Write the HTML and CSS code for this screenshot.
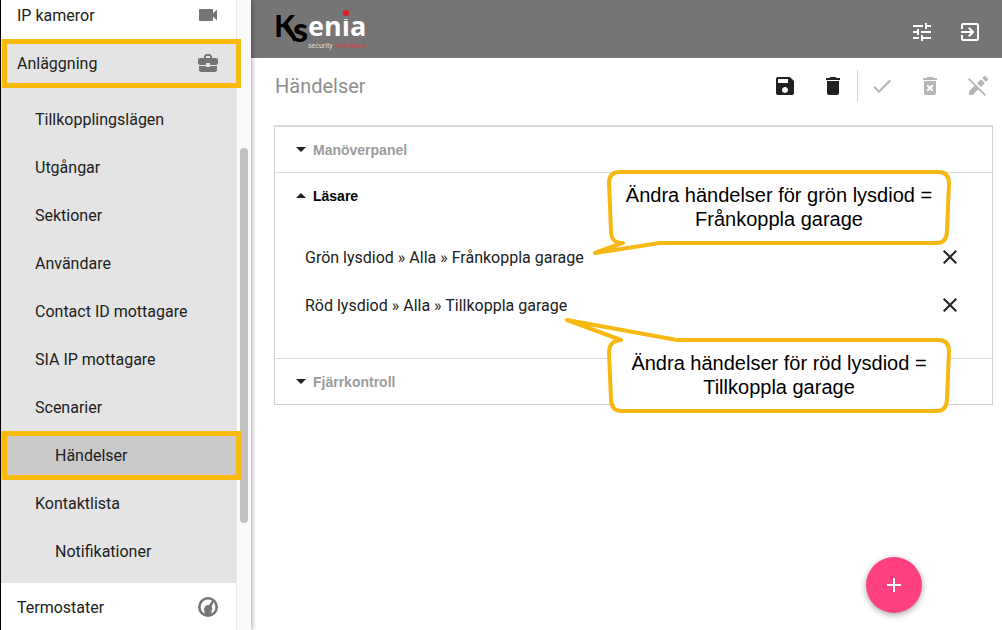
FILE: index.html
```html
<!DOCTYPE html>
<html lang="sv">
<head>
<meta charset="utf-8">
<title>Ksenia – Händelser</title>
<link rel="stylesheet" href="styles.css">
</head>
<body>
<div class="app">
  <nav class="sidebar" aria-label="Meny">
    <div class="menu">
      <a class="item item-first" href="#"><span>IP kameror</span>
        <svg class="icon" viewBox="0 0 24 24"><path d="M17 10.500V7c0-.55-.45-1-1-1H4c-.55 0-1 .45-1 1v10c0 .55.45 1 1 1h12c.55 0 1-.45 1-1v-3.500l4 4v-11l-4 4z"/></svg></a>
      <a class="item item-open marked" href="#"><span>Anläggning</span>
        <svg class="icon" viewBox="0 0 24 24"><path d="M10 16v-1H3.010L3 19c0 1.110.89 2 2 2h14c1.110 0 2-.89 2-2v-4h-7v1h-4zm10-9h-4.010V5l-2-2h-4l-2 2v2H4c-1.100 0-2 .9-2 2v3c0 1.110.89 2 2 2h6v-2h4v2h6c1.100 0 2-.9 2-2V9c0-1.100-.9-2-2-2zm-6 0h-4V5h4v2z"/></svg></a>
      <div class="submenu">
        <a class="item sub" href="#">Tillkopplingslägen</a>
        <a class="item sub" href="#">Utgångar</a>
        <a class="item sub" href="#">Sektioner</a>
        <a class="item sub" href="#">Användare</a>
        <a class="item sub" href="#">Contact ID mottagare</a>
        <a class="item sub" href="#">SIA IP mottagare</a>
        <a class="item sub" href="#">Scenarier</a>
        <a class="item subsub current marked" href="#" aria-current="page">Händelser</a>
        <a class="item sub" href="#">Kontaktlista</a>
        <a class="item subsub" href="#">Notifikationer</a>
      </div>
      <a class="item" href="#"><span>Termostater</span>
        <svg class="icon" viewBox="0 0 24 24"><circle cx="12" cy="12" r="8.700" fill="none" stroke="#757575" stroke-width="2.600"/><path d="M8.500 20v-4a4 4 0 0 1 4.300-5.800L16.500 5l1.500 1-2.300 5.600a4 4 0 0 1-.2 4.400v4z"/></svg></a>
    </div>
    <div class="track"><div class="thumb"></div></div>
  </nav>

  <div class="content">
    <header class="topbar">
      <svg class="logo" viewBox="0 0 100 46" role="img" aria-label="Ksenia security innovation">
        <text class="logo-k" x="0" y="33">K</text>
        <path d="M10 21l4-1 8 13-2 5z"/>
        <text class="logo-s" x="19" y="38">s</text>
        <text class="logo-enia" x="34" y="32">enia</text>
        <path class="logo-gap" d="M68 5h9v10h-9z"/>
        <circle cx="72" cy="9" r="3" fill="#e31b23"/>
        <text class="logo-tag" x="34" y="44">security <tspan class="logo-red">innovation</tspan></text>
      </svg>
      <div class="actions">
        <button class="icon-btn light" aria-label="Inställningar"><svg class="icon" viewBox="0 0 24 24"><path d="M3 17v2h6v-2H3zM3 5v2h10V5H3zm10 16v-2h8v-2h-8v-2h-2v6h2zM7 9v2H3v2h4v2h2V9H7zm14 4v-2H11v2h10zm-6-4h2V7h4V5h-4V3h-2v6z"/></svg></button>
        <button class="icon-btn light" aria-label="Logga ut"><svg class="icon" viewBox="0 0 24 24"><path d="M10.090 15.590L11.500 17l5-5-5-5-1.410 1.410L12.670 11H3v2h9.670l-2.580 2.590zM19 3H5c-1.110 0-2 .9-2 2v4h2V5h14v14H5v-4H3v4c0 1.100.89 2 2 2h14c1.100 0 2-.9 2-2V5c0-1.100-.9-2-2-2z"/></svg></button>
      </div>
    </header>

    <div class="titlebar">
      <h1 class="title">Händelser</h1>
      <div class="actions">
        <button class="icon-btn" aria-label="Spara"><svg class="icon" viewBox="0 0 24 24"><path d="M17 3H5c-1.110 0-2 .9-2 2v14c0 1.100.89 2 2 2h14c1.100 0 2-.9 2-2V7l-4-4zm-5 16c-1.660 0-3-1.340-3-3s1.340-3 3-3 3 1.340 3 3-1.340 3-3 3zm3-10H5V5h10v4z"/></svg></button>
        <button class="icon-btn" aria-label="Ta bort"><svg class="icon" viewBox="0 0 24 24"><path d="M6 19c0 1.100.9 2 2 2h8c1.100 0 2-.9 2-2V7H6v12zM19 4h-3.500l-1-1h-5l-1 1H5v2h14V4z"/></svg></button>
        <span class="divider"></span>
        <button class="icon-btn" disabled aria-label="Bekräfta"><svg class="icon" viewBox="0 0 24 24"><path d="M9 16.170L4.830 12l-1.420 1.410L9 19 21 7l-1.410-1.410z"/></svg></button>
        <button class="icon-btn" disabled aria-label="Radera alla"><svg class="icon" viewBox="0 0 24 24"><path fill-rule="evenodd" d="M6 19c0 1.100.9 2 2 2h8c1.100 0 2-.9 2-2V7H6v12zM8.460 11.880l1.410-1.410L12 12.590l2.120-2.120 1.410 1.410L13.410 14l2.120 2.120-1.410 1.410L12 15.410l-2.120 2.120-1.410-1.410L10.590 14l-2.130-2.120zM15.500 4l-1-1h-5l-1 1H5v2h14V4z"/></svg></button>
        <button class="icon-btn" disabled aria-label="Redigering av"><svg class="icon" viewBox="0 0 24 24"><path d="M18.660 2c-.24 0-.47.09-.66.280l-1.830 1.820 3.750 3.750 1.830-1.830c.39-.39.39-1.040 0-1.410l-2.340-2.330c-.21-.19-.48-.28-.75-.28M3.280 4L2 5.280l6.500 6.470L3 17.250V21h3.750l5.500-5.500L18.720 22 20 20.730 3.280 4M15.100 5.200l-4 4 3.750 3.750 4-4L15.100 5.200z"/></svg></button>
      </div>
    </div>

    <main class="panel">
      <section class="group">
        <button class="group-head" aria-expanded="false"><svg class="caret" viewBox="0 0 10 5"><path d="M0 0h10L5 5z"/></svg>Manöverpanel</button>
      </section>
      <section class="group">
        <button class="group-head open" aria-expanded="true"><svg class="caret" viewBox="0 0 10 5"><path d="M0 5h10L5 0z"/></svg>Läsare</button>
        <ul class="entries">
          <li class="entry"><a class="entry-link" href="#">Grön lysdiod » Alla » Frånkoppla garage</a>
            <button class="icon-btn" aria-label="Ta bort grön lysdiod"><svg class="icon" viewBox="0 0 24 24"><path d="M19 6.410L17.590 5 12 10.590 6.410 5 5 6.410 10.590 12 5 17.590 6.410 19 12 13.410 17.590 19 19 17.590 13.410 12z"/></svg></button></li>
          <li class="entry"><a class="entry-link" href="#">Röd lysdiod » Alla » Tillkoppla garage</a>
            <button class="icon-btn" aria-label="Ta bort röd lysdiod"><svg class="icon" viewBox="0 0 24 24"><path d="M19 6.410L17.590 5 12 10.590 6.410 5 5 6.410 10.590 12 5 17.590 6.410 19 12 13.410 17.590 19 19 17.590 13.410 12z"/></svg></button></li>
        </ul>
      </section>
      <section class="group">
        <button class="group-head" aria-expanded="false"><svg class="caret" viewBox="0 0 10 5"><path d="M0 0h10L5 5z"/></svg>Fjärrkontroll</button>
      </section>

      <div class="callout callout-green">
        <svg class="bubble" viewBox="0 0 344 76"><path d="M16 74C7 74 4 70 4 62L2 14Q2 3 13 3H331Q342 3 342 14L340 62Q340 74 329 74H53L-12 84L15 74Z"/></svg>
        <p class="callout-text">Ändra händelser för grön lysdiod =<br>Frånkoppla garage</p>
      </div>
      <div class="callout callout-red">
        <svg class="bubble" viewBox="0 0 344 76"><path d="M14 3C6 4 2 7 2 16L4 62Q4 74 15 74H329Q340 74 340 62L342 14Q342 3 331 3H70L-40 -17L14 3Z"/></svg>
        <p class="callout-text">Ändra händelser för röd lysdiod =<br>Tillkoppla garage</p>
      </div>
    </main>
  </div>
  <button class="fab" aria-label="Lägg till"><svg class="icon" viewBox="0 0 24 24"><path d="M19 13h-6v6h-2v-6H5v-2h6V5h2v6h6v2z"/></svg></button>
</div>
</body>
</html>
```
FILE: styles.css
```css
* { box-sizing: border-box; }
body {
  margin: 0;
  font-family: Roboto, "Liberation Sans", sans-serif;
  font-size: 16px;
  line-height: 24px;
  color: #212121;
  background: #fff;
}
a { color: inherit; text-decoration: none; }
button { font: inherit; color: inherit; border: 0; padding: 0; background: none; cursor: pointer; }

.app { display: flex; height: 100vh; overflow: hidden; }

.sidebar {
  position: relative;
  z-index: 1;
  display: flex;
  flex: none;
  width: 251px;
  border-left: 1px solid #000;
  background: #fff;
  box-shadow: 1px 0 5px rgba(0, 0, 0, 0.35);
}
.menu { flex: 1; }
.item {
  position: relative;
  display: flex;
  align-items: center;
  justify-content: space-between;
  height: 48px;
  padding: 2px 16px 0;
}
.item .icon { margin-top: -2px; fill: #757575; }
.item-first { height: 39px; padding-bottom: 9px; }
.item-open, .submenu { background: #e4e4e4; }
.submenu { padding: 8px 0; }
.sub { padding-left: 34px; }
.subsub { padding-left: 54px; }
.current { background: #cacaca; }
.marked::after {
  content: "";
  position: absolute;
  inset: 0 -5px -1px 1px;
  border: 5px solid #fbb90d;
}
.track {
  width: 15px;
  padding: 148px 3px 0;
  border-left: 1px solid #e8e8e8;
  background: #fafafa;
}
.thumb { height: 375px; border-radius: 4px; background: #c1c1c1; }

.icon { display: block; flex: none; width: 24px; height: 24px; fill: currentColor; }
.icon-btn { display: grid; place-items: center; width: 48px; height: 48px; }
.icon-btn:disabled { color: #b5b5b5; }
.light { color: #fff; }
.actions { display: flex; align-items: center; }
.divider { width: 1px; height: 32px; background: #d5d5d5; }

.content { flex: 1; min-width: 0; }
.topbar {
  display: flex;
  justify-content: space-between;
  padding: 4px 8px 2px 23px;
  background: #757575;
}
.topbar .actions { padding-top: 4px; }
.logo { width: 100px; height: 46px; overflow: visible; }
.logo-k { font: 700 31px Lato, sans-serif; }
.logo-s { font: 900 34px Lato, sans-serif; }
.logo-enia { font: 700 27px "Open Sans", sans-serif; fill: #fff; }
.logo-gap { fill: #757575; }
.logo-tag { font: 7px Roboto, sans-serif; fill: #ddd; }
.logo-red { fill: #d8403f; }

.titlebar {
  display: flex;
  align-items: center;
  justify-content: space-between;
  height: 56px;
  padding-left: 24px;
}
.title { margin: 0; font-size: 20px; font-weight: 400; color: #8e8e8e; }

.panel {
  position: relative;
  margin: 11px 9px 0 23px;
  border: 1px solid #cfcfcf;
  border-top: 2px solid #dadada;
}
.group + .group { border-top: 1px solid #dcdcdc; }
.group-head {
  display: flex;
  align-items: center;
  gap: 7px;
  width: 100%;
  height: 45px;
  padding: 0 21px;
  font: 700 14px "Liberation Sans", Arial, sans-serif;
  color: #9b9b9b;
}
.open { color: #000; }
.caret { width: 10px; height: 5px; fill: #212121; }
.entries { margin: 0; padding: 15px 18px 29px 30px; list-style: none; }
.entry { display: flex; align-items: center; justify-content: space-between; height: 48px; }
.entry-link { padding-top: 2px; }

/* annotation bubbles laid over the panel */
.callout {
  position: absolute;
  left: 332px;
  width: 344px;
  height: 76px;
}
.callout-green { top: 42px; }
.callout-red { top: 210px; }
.bubble { position: absolute; inset: 0; width: 100%; height: 100%; overflow: visible; }
.bubble path { fill: #fff; stroke: #f7b911; stroke-width: 4; stroke-linejoin: round; }
.callout-text {
  position: relative;
  margin: 0;
  padding-top: 14px;
  font: 20px/24px "Liberation Sans", Arial, sans-serif;
  color: #000;
  text-align: center;
}

.fab {
  position: fixed;
  right: 80px;
  bottom: 17px;
  display: grid;
  place-items: center;
  width: 56px;
  height: 56px;
  border-radius: 50%;
  color: #fff;
  background: #ff4081;
  box-shadow: 0 2px 6px rgba(0, 0, 0, 0.35);
}
```
